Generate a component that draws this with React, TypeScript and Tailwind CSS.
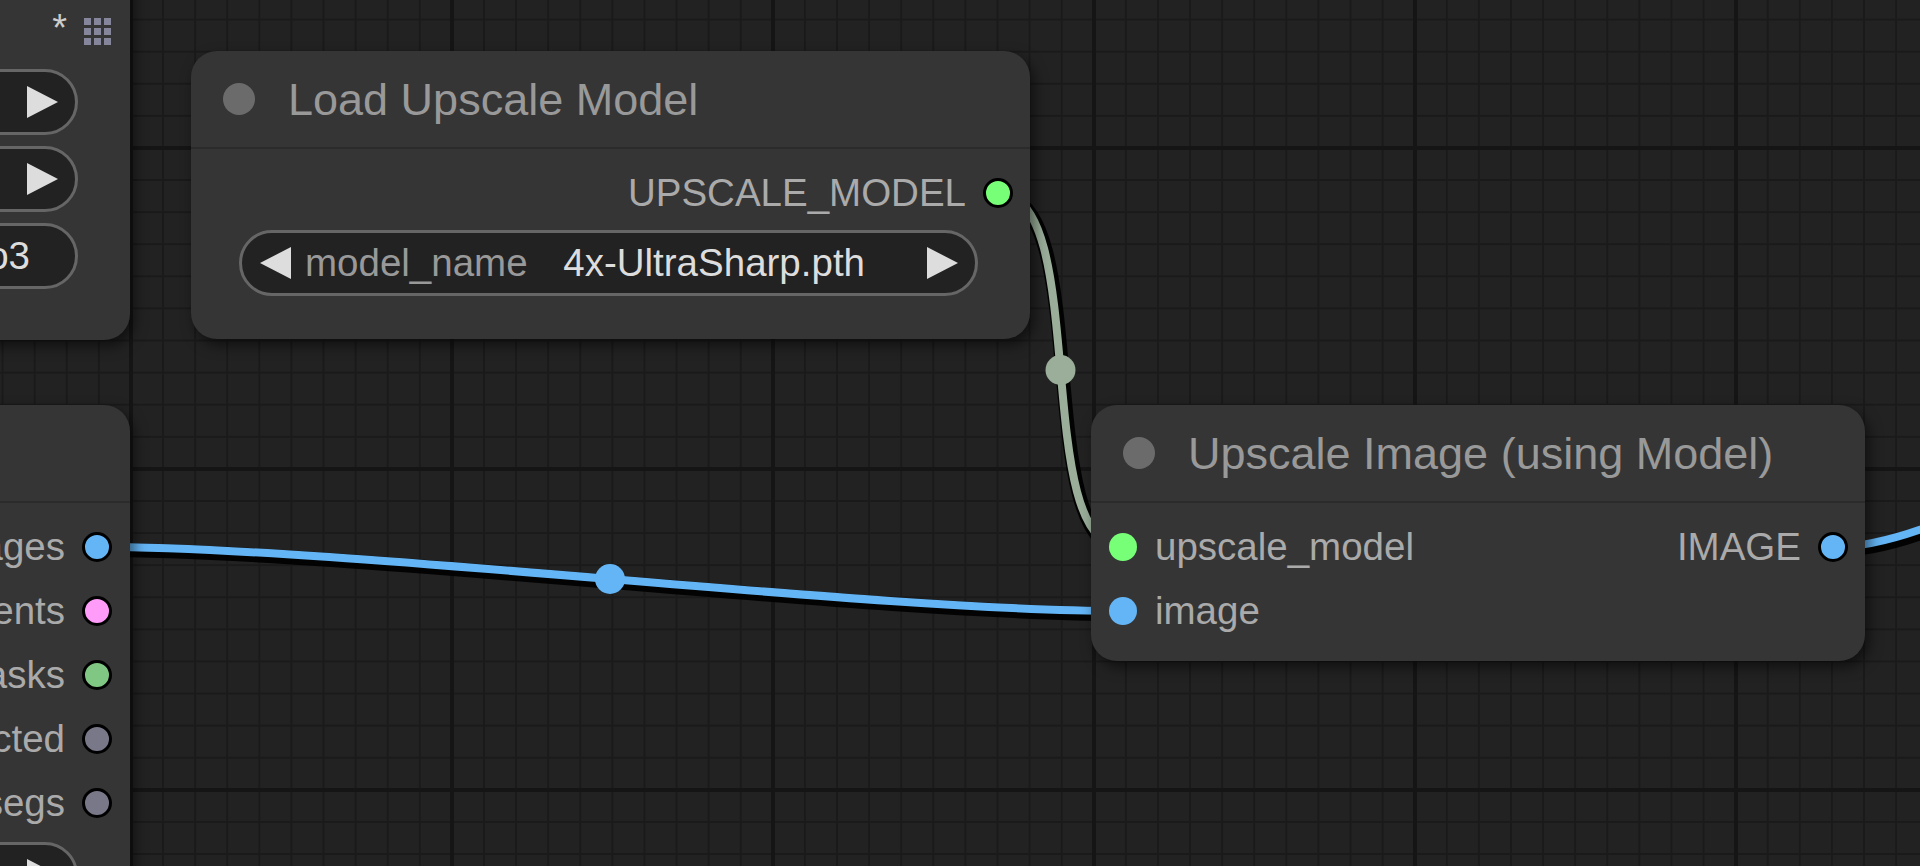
import React from 'react';
import clsx from 'clsx';

const font = "font-['Liberation_Sans',Arial,sans-serif]";

const ArrowRight: React.FC = () => (
  <svg width="31" height="32" viewBox="0 0 31 32" className="shrink-0">
    <polygon points="0,0 31,16 0,32" fill="#dddddd" />
  </svg>
);

const ArrowLeft: React.FC = () => (
  <svg width="31" height="32" viewBox="0 0 31 32" className="shrink-0">
    <polygon points="31,0 0,16 31,32" fill="#dddddd" />
  </svg>
);

const Dot: React.FC<{ color: string; ring?: boolean }> = ({ color, ring }) => (
  <span
    className={clsx(
      'block shrink-0 rounded-full',
      ring ? 'h-[30px] w-[30px] border-[3px] border-black' : 'h-[28px] w-[28px]',
      color
    )}
  />
);

const NodeTitle: React.FC<{ title?: string }> = ({ title }) => (
  <div className="flex h-[98px] items-center gap-[33px] border-b-2 border-[#2b2b2b] pl-[32px]">
    <span className="block h-[32px] w-[32px] rounded-full bg-[#6b6b6b]" />
    {title && <span className="whitespace-nowrap text-[45px] leading-none text-[#999999]">{title}</span>}
  </div>
);

const OutputSlot: React.FC<{ label: string; color: string }> = ({ label, color }) => (
  <div className="flex h-[64px] items-center justify-end gap-[17px]">
    <span className="whitespace-nowrap text-[38.5px] leading-none text-[#aaaaaa]">{label}</span>
    <Dot color={color} ring />
  </div>
);

const InputSlot: React.FC<{ label: string; color: string }> = ({ label, color }) => (
  <div className="flex h-[64px] items-center gap-[18px]">
    <Dot color={color} />
    <span className="whitespace-nowrap text-[38.5px] leading-none text-[#aaaaaa]">{label}</span>
  </div>
);

const Pill: React.FC<{ children: React.ReactNode; className?: string }> = ({ children, className }) => (
  <div
    className={clsx(
      'flex h-[66px] items-center rounded-full border-[3px] border-[#666666] bg-[#222222] text-[38.5px] leading-none',
      className
    )}
  >
    {children}
  </div>
);

const Links: React.FC = () => (
  <svg className="absolute left-0 top-0 overflow-visible" width="1920" height="866" viewBox="0 0 1920 866">
    <g transform="translate(2 3)" fill="none" stroke="#000" strokeOpacity="0.9" strokeWidth="14">
      <path d="M97,547 C354,547 866,611 1123,611" />
      <path d="M998,193 C1092,193 1029,547 1123,547" />
      <path d="M1833,547 C2015,547 2318,250 2500,250" />
    </g>
    <g fill="none" strokeWidth="8">
      <path d="M97,547 C354,547 866,611 1123,611" stroke="#64b5f6" />
      <path d="M998,193 C1092,193 1029,547 1123,547" stroke="#9aae9a" />
      <path d="M1833,547 C2015,547 2318,250 2500,250" stroke="#64b5f6" />
    </g>
    <circle cx="610" cy="579" r="15" fill="#64b5f6" />
    <circle cx="1060.5" cy="370" r="15" fill="#9aae9a" />
  </svg>
);

export default function App() {
  return (
    <div
      className={clsx(
        'relative h-[866px] w-full overflow-hidden bg-[#222222]',
        '[background-image:linear-gradient(to_right,#151515_4px,transparent_4px),linear-gradient(to_bottom,#151515_4px,transparent_4px),linear-gradient(to_right,#1a1a1a_2px,transparent_2px),linear-gradient(to_bottom,#1a1a1a_2px,transparent_2px)]',
        '[background-size:321px_321px,321px_321px,32.1px_32.1px,32.1px_32.1px]',
        '[background-position:129px_0,0_146px,1.6px_0,0_18.6px]',
        font
      )}
    >
      <Links />

      {/* left node, upper */}
      <div className="absolute left-[-400px] top-[-100px] h-[440px] w-[530px] rounded-[26px] bg-[#353535] shadow-[4px_6px_14px_rgba(0,0,0,0.55)]">
        <div className="flex h-[169px] items-end justify-end gap-[17px] pb-[22px] pr-[19px]">
          <span className="text-[38px] leading-none text-[#cccccc]">*</span>
          <div className="mb-[2px] grid grid-cols-3 gap-[3px]">
            {Array.from({ length: 9 }).map((_, i) => (
              <span key={i} className="block h-[7px] w-[7px] bg-[#85859b]" />
            ))}
          </div>
        </div>
        <div className="flex flex-col gap-[11px] pl-[48px] pr-[52px]">
          <Pill className="justify-end pr-[17px]">
            <ArrowRight />
          </Pill>
          <Pill className="justify-end pr-[17px]">
            <ArrowRight />
          </Pill>
          <Pill className="justify-end pr-[45px] text-[#dddddd]">
            <span className="whitespace-nowrap">face_yolo3</span>
          </Pill>
        </div>
      </div>

      {/* left node, lower */}
      <div className="absolute left-[-400px] top-[405px] h-[600px] w-[530px] rounded-[26px] bg-[#353535] shadow-[4px_6px_14px_rgba(0,0,0,0.55)]">
        <NodeTitle />
        <div className="flex flex-col pr-[18px] pt-[12px]">
          <OutputSlot label="images" color="bg-[#64b5f6]" />
          <OutputSlot label="latents" color="bg-[#ff9cf9]" />
          <OutputSlot label="masks" color="bg-[#81c784]" />
          <OutputSlot label="detected" color="bg-[#787888]" />
          <OutputSlot label="segs" color="bg-[#787888]" />
        </div>
        <div className="mt-[7px] pl-[48px] pr-[52px]">
          <Pill className="justify-end pr-[17px]">
            <ArrowRight />
          </Pill>
        </div>
      </div>

      {/* Load Upscale Model */}
      <div className="absolute left-[191px] top-[51px] h-[288px] w-[839px] rounded-[26px] bg-[#353535] shadow-[4px_6px_14px_rgba(0,0,0,0.55)]">
        <NodeTitle title="Load Upscale Model" />
        <div className="pr-[17px] pt-[12px]">
          <OutputSlot label="UPSCALE_MODEL" color="bg-[#77ff77]" />
        </div>
        <div className="mt-[5px] pl-[48px] pr-[52px]">
          <Pill className="pl-[18px] pr-[17px]">
            <ArrowLeft />
            <span className="ml-[14px] whitespace-nowrap text-[#999999]">model_name</span>
            <span className="ml-auto whitespace-nowrap text-[#dddddd]">4x-UltraSharp.pth</span>
            <span className="ml-[62px] flex">
              <ArrowRight />
            </span>
          </Pill>
        </div>
      </div>

      {/* Upscale Image (using Model) */}
      <div className="absolute left-[1091px] top-[405px] h-[256px] w-[774px] rounded-[26px] bg-[#353535] shadow-[4px_6px_14px_rgba(0,0,0,0.55)]">
        <NodeTitle title="Upscale Image (using Model)" />
        <div className="flex justify-between pl-[18px] pr-[17px] pt-[12px]">
          <div className="flex flex-col">
            <InputSlot label="upscale_model" color="bg-[#77ff77]" />
            <InputSlot label="image" color="bg-[#64b5f6]" />
          </div>
          <div className="flex flex-col">
            <OutputSlot label="IMAGE" color="bg-[#64b5f6]" />
          </div>
        </div>
      </div>
    </div>
  );
}
